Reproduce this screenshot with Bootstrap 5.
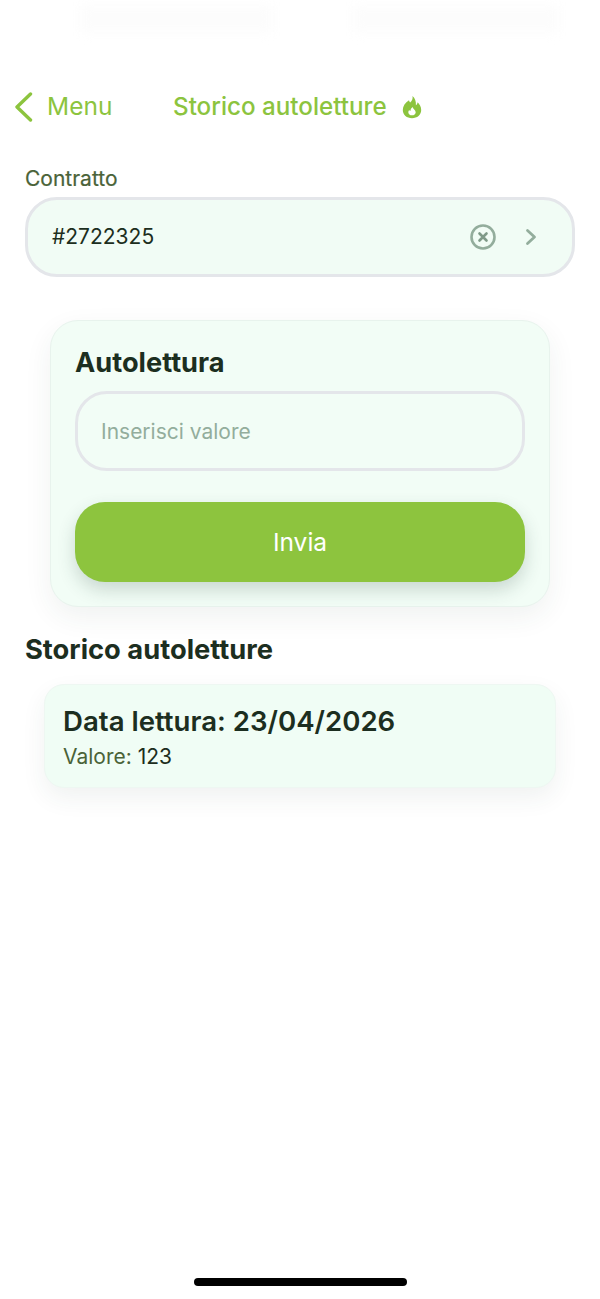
<!DOCTYPE html>
<html lang="it">
<head>
    <meta charset="UTF-8">
    <meta name="viewport" content="width=device-width, initial-scale=1.0">
    <title>Storico autoletture</title>
    <link href="https://cdn.jsdelivr.net/npm/bootstrap@5.3.0/dist/css/bootstrap.min.css" rel="stylesheet">
    <style>
        html, body { height: 100%; }
        body { font-family: Inter, "Liberation Sans", sans-serif; background: #fff; color: #1c2e20; }
        .app-screen { height: 1299px; overflow: hidden; }

        /* blurred remains of the status bar */
        .status-ghost { height: 85px; padding: 6px 40px 0 80px; gap: 80px; }
        .ghost-bar { height: 26px; background: #fcfcfc; filter: blur(6px); }
        .ghost-left { width: 193px; }
        .ghost-right { width: 206px; }

        /* top bar */
        .top-bar { height: 43px; padding-left: 14px; }
        .back-link { color: #8cc43e; font-size: 24.5px; text-decoration: none; width: 159px; gap: 13px; }
        .top-title { color: #8cc43e; font-size: 24.2px; font-weight: 500; gap: 15px; padding-top: 1px; }

        /* contract picker */
        .field-label { color: #4a6338; font-size: 21px; line-height: 25px; font-weight: 400; margin: 38px 0 6px 25px; -webkit-text-stroke: .2px #4a6338; }
        .picker-box {
            margin: 0 25px; height: 80px; padding: 0 35px 0 24px;
            background: #f1fcf5; border: 3px solid #e4e6ea; border-radius: 32px;
            font-size: 21px;
        }
        .picker-icons { gap: 29px; }

        /* reading card */
        .reading-card {
            margin: 43px 50px 0; padding: 26px 24px 24px;
            background: #f2fdf6; border: 1px solid #e8f3ed; border-radius: 28px;
            box-shadow: 0 10px 28px rgba(40, 70, 60, .07);
        }
        .card-heading { font-size: 27.2px; line-height: 32px; font-weight: 700; margin: 0 0 12px; color: #1c2e20; }
        .value-input.form-control {
            height: 80px; padding: 0 23px; font-size: 21px; color: #1c2e20;
            background: #f2fdf6; border: 3px solid #e4e6ea; border-radius: 32px;
        }
        .value-input.form-control::placeholder { color: #93ad9c; opacity: 1; }
        .send-btn.btn {
            display: block; width: 100%; height: 80px; margin-top: 31px;
            background: #8dc43e; border: 0; border-radius: 30px; color: #fff; font-size: 24.5px;
            box-shadow: 0 8px 18px rgba(40, 70, 60, .2);
        }

        /* history */
        .history-heading { font-size: 27.3px; line-height: 32px; font-weight: 700; margin: 27px 0 18px 25px; color: #1c2e20; }
        .history-item {
            margin: 0 44px; height: 104px; padding: 19px 18px;
            background: #f0fdf5; border: 1px solid #eef7f2; border-radius: 20px;
            box-shadow: 0 10px 24px rgba(40, 70, 60, .07);
        }
        .history-date { font-size: 27.6px; line-height: 34px; font-weight: 600; margin: 0 0 5px; color: #1c2e20; }
        .history-value { font-size: 21px; line-height: 28px; margin: 0; }
        .history-value span { color: #4a6338; }

        .home-bar { position: fixed; left: 194px; top: 1278px; width: 213px; height: 8px; background: #000; border-radius: 4px; }
    </style>
</head>
<body>
<div class="app-screen">
    <div class="status-ghost d-flex">
        <div class="ghost-bar ghost-left"></div>
        <div class="ghost-bar ghost-right"></div>
    </div>

    <!-- Navigation -->
    <div class="top-bar d-flex align-items-center">
        <a class="back-link d-flex align-items-center" href="#">
            <svg width="20" height="30" viewBox="0 0 20 30" fill="none" stroke="#8cc43e" stroke-width="3.4" stroke-linecap="round" stroke-linejoin="round"><path d="M16.5 2 L3 15 L16.5 28"/></svg>
            <span>Menu</span>
        </a>
        <div class="top-title d-flex align-items-center">
            <span>Storico autoletture</span>
            <svg width="20" height="24" viewBox="0 0 20 24"><path fill="#8cc43e" fill-rule="evenodd" d="M10.5 1c.6 3-.6 4.6-2.4 6.6C7.6 6.9 7.2 6.2 7 5.3 3.2 8 .8 11 .8 15c0 4.9 4 8.2 9.2 8.2s9.2-3.3 9.2-8.2c0-3.5-1.8-5.7-3.6-7.7-.2 1.3-.7 2.3-1.7 3C14.2 6.6 13 3 10.5 1zM10.5 12c.3 2 3.2 3 3.2 5.2 0 1.900-1.700 3.100-3.700 3.100s-3.700-1.200-3.700-3.100c0-.9.4-1.600.9-2.300.4.600.7.900 1.200 1.100.1-1.500.8-2.900 2.100-4z"/></svg>
        </div>
    </div>

    <!-- Contract -->
    <div class="field-label">Contratto</div>
    <div class="picker-box d-flex align-items-center justify-content-between">
        <span>#2722325</span>
        <div class="picker-icons d-flex align-items-center">
            <svg width="26" height="26" viewBox="0 0 26 26" fill="none" stroke="#93ad9c" stroke-width="2.6" stroke-linecap="round"><circle cx="13" cy="13" r="11.5"/><path stroke="#7f9a88" d="M9.5 9.5l7 7M16.5 9.5l-7 7"/></svg>
            <svg width="12" height="18" viewBox="0 0 12 18" fill="none" stroke="#93ad9c" stroke-width="2.8" stroke-linecap="round" stroke-linejoin="round"><path d="M2.5 2.5L9.5 9L2.5 15.5"/></svg>
        </div>
    </div>

    <!-- Reading form -->
    <div class="reading-card">
        <h2 class="card-heading">Autolettura</h2>
        <input class="form-control value-input" type="text" placeholder="Inserisci valore">
        <button class="btn send-btn" type="button">Invia</button>
    </div>

    <!-- History -->
    <h2 class="history-heading">Storico autoletture</h2>
    <div class="history-item">
        <h3 class="history-date">Data lettura: 23/04/2026</h3>
        <p class="history-value"><span>Valore:</span> 123</p>
    </div>
</div>
<div class="home-bar"></div>

<script src="https://cdn.jsdelivr.net/npm/bootstrap@5.3.0/dist/js/bootstrap.bundle.min.js"></script>
</body>
</html>
